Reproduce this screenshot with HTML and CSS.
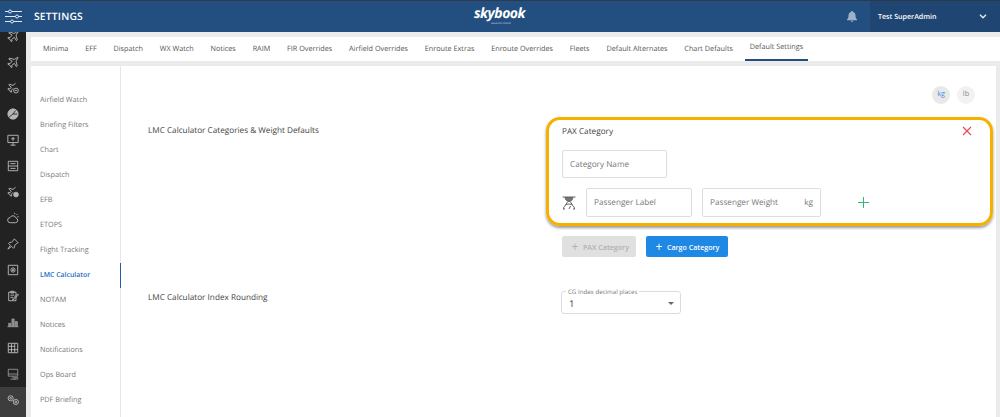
FILE: index.html
```html
<!DOCTYPE html>
<html lang="en">
<head>
    <meta charset="UTF-8">
    <title>Settings</title>
    <link rel="stylesheet" href="styles.css">
</head>
<body>
    <header class="topbar">
        <div class="topbar-menu">
            <svg width="17" height="15" viewBox="0 0 17 15" fill="none" stroke="#dfe8f2" stroke-width="1">
                <path d="M0 2.500h17M0 7.500h17M0 12.500h17"/>
                <circle cx="5" cy="2.500" r="1.500" fill="#234f80"/>
                <circle cx="12" cy="7.500" r="1.500" fill="#234f80"/>
                <circle cx="7" cy="12.500" r="1.500" fill="#234f80"/>
            </svg>
        </div>
        <div class="topbar-title">SETTINGS</div>
        <div class="logo">
            <span class="logo-name">skybook</span>
            <span class="logo-sub">aviation cloud</span>
        </div>
        <div class="topbar-bell">
            <svg width="10" height="11" viewBox="0 0 10 11" fill="#9db2c9">
                <path d="M5 0c.6 0 1 .4 1 1 1.700.5 2.500 1.800 2.500 3.500 0 2 .5 3 1.500 4v.7H0v-.7c1-1 1.500-2 1.500-4C1.500 2.800 2.300 1.500 4 1c0-.6.4-1 1-1zM3.700 9.800h2.600C6.200 10.500 5.700 11 5 11s-1.200-.5-1.300-1.200z"/>
            </svg>
        </div>
        <div class="topbar-user">
            <span>Test SuperAdmin</span>
            <svg width="8" height="5" viewBox="0 0 8 5" fill="none" stroke="#e6edf5" stroke-width="1.300">
                <path d="M1 .8l3 3 3-3"/>
            </svg>
        </div>
    </header>

    <div class="main">
        <nav class="rail">
            <div class="rail-list">
                <div class="rail-item"><svg viewBox="0 0 14 14"><path d="M12.500 1.500L8.500 4 3 2.500 2 3.500 6 6 3.500 9 1.500 8.500 1 9.500l2.500 1.500L5 13.500l1-.5-.5-2L8.500 8.500 11 12.500l1-1L10.500 6 13 2z"/></svg></div>
                <div class="rail-item"><svg viewBox="0 0 14 14"><path d="M12.500 1.500L8.500 4 3 2.500 2 3.500 6 6 3.500 9 1.500 8.500 1 9.500l2.500 1.500L5 13.500l1-.5-.5-2L8.500 8.500 11 12.500l1-1L10.500 6 13 2z"/></svg></div>
                <div class="rail-item"><svg viewBox="0 0 14 14"><path d="M10 1.500L7 4 3 2.500 2 3.500 5 6 3.500 8 1.500 7.500 1 8.500l2 1.200L4.500 12l1-.5-.5-1.800L7 7.500"/><circle cx="10.500" cy="10" r="2.800"/><path d="M9 10h3"/></svg></div>
                <div class="rail-item"><svg viewBox="0 0 14 14"><circle cx="7" cy="7" r="6" class="solid"/><path d="M2.500 10.500L7 7l3-4M7 7h5" class="cut"/></svg></div>
                <div class="rail-item"><svg viewBox="0 0 14 14"><path d="M1 1.500h12v8.500H1zM7 10v3M4 13h6M7 3.500v4.500M5 5.500h4"/></svg></div>
                <div class="rail-item"><svg viewBox="0 0 14 14"><path d="M1.500 1.500h11v11h-11zM1.500 7h11M4 4.200h6M4 9.800h6"/></svg></div>
                <div class="rail-item"><svg viewBox="0 0 14 14"><path d="M10 1.500L7 4 3 2.500 2 3.500 5 6 3.500 8 1.500 7.500 1 8.500l2 1.200L4.500 12l1-.5-.5-1.800L7 7.500"/><circle cx="10.500" cy="10" r="2.800" class="solid"/></svg></div>
                <div class="rail-item"><svg viewBox="0 0 14 14"><path d="M4 12.500a3 3 0 0 1-.5-6A3.800 3.800 0 0 1 10.500 7a2.800 2.800 0 0 1-.5 5.500zM9 1v1.500M12 2.500l-1 1M13.500 5.500H12"/></svg></div>
                <div class="rail-item"><svg viewBox="0 0 14 14"><path d="M8.500 1L13 5.500l-1.200.6-2.800 2.400-.3 2.500-1 1-2.200-2.200L1 13l3-4.500L1.800 6.300l1-1 2.500-.3 2.500-2.800z"/></svg></div>
                <div class="rail-item"><svg viewBox="0 0 14 14"><path d="M1.500 1.500h11v11h-11z"/><circle cx="7" cy="7" r="2.500"/><circle cx="7" cy="7" r=".8" class="solid"/></svg></div>
                <div class="rail-item"><svg viewBox="0 0 14 14"><path d="M2 2.500h8.500v10H2zM4.500 1.500h3.500v2H4.500zM4 6h4.500M4 8.500h3M7 10l5.500-5.500 1 1L8 11l-1.500.3z"/></svg></div>
                <div class="rail-item rail-dim"><svg viewBox="0 0 14 14"><path d="M.5 12.500h13M2 12.500v-4h2.500v4M5.800 12.500v-9h2.500v9M9.500 12.500v-6H12v6" class="filled"/></svg></div>
                <div class="rail-item"><svg viewBox="0 0 14 14"><path d="M1.500 1.500h11v11h-11zM5.200 1.500v11M9 1.500v11M1.500 5h7.500M1.500 9h11"/></svg></div>
                <div class="rail-item rail-dim"><svg viewBox="0 0 14 14"><path d="M1.500 1.500h11v8h-11z"/><path d="M1.500 7h11M7 9.500v3M4 13h6M9 11h3.500v2H9z"/></svg></div>
                <div class="rail-item rail-active"><svg viewBox="0 0 14 14"><circle cx="4.300" cy="5" r="3"/><circle cx="4.300" cy="5" r="1"/><circle cx="10.300" cy="9.300" r="3"/><circle cx="10.300" cy="9.300" r="1"/></svg></div>
            </div>
        </nav>

        <div class="page">
            <div class="tabs">
                <a class="tab">Minima</a>
                <a class="tab">EFF</a>
                <a class="tab">Dispatch</a>
                <a class="tab">WX Watch</a>
                <a class="tab">Notices</a>
                <a class="tab">RAIM</a>
                <a class="tab">FIR Overrides</a>
                <a class="tab">Airfield Overrides</a>
                <a class="tab">Enroute Extras</a>
                <a class="tab">Enroute Overrides</a>
                <a class="tab">Fleets</a>
                <a class="tab">Default Alternates</a>
                <a class="tab">Chart Defaults</a>
                <a class="tab tab-active">Default Settings</a>
            </div>

            <div class="panel">
                <aside class="subnav">
                    <a class="subnav-item">Airfield Watch</a>
                    <a class="subnav-item">Briefing Filters</a>
                    <a class="subnav-item">Chart</a>
                    <a class="subnav-item">Dispatch</a>
                    <a class="subnav-item">EFB</a>
                    <a class="subnav-item">ETOPS</a>
                    <a class="subnav-item">Flight Tracking</a>
                    <a class="subnav-item subnav-active">LMC Calculator</a>
                    <a class="subnav-item">NOTAM</a>
                    <a class="subnav-item">Notices</a>
                    <a class="subnav-item">Notifications</a>
                    <a class="subnav-item">Ops Board</a>
                    <a class="subnav-item">PDF Briefing</a>
                </aside>

                <section class="content">
                    <div class="units">
                        <span class="unit unit-on">kg</span>
                        <span class="unit">lb</span>
                    </div>

                    <div class="setting setting-categories">
                        <div class="setting-name">LMC Calculator Categories &amp; Weight Defaults</div>
                        <div class="setting-body">
                            <div class="card">
                                <div class="card-head">
                                    <span>PAX Category</span>
                                    <svg width="10" height="10" viewBox="0 0 10 10" fill="none" stroke="#e5484d" stroke-width="1.100">
                                        <path d="M1 1l8 8M9 1l-8 8"/>
                                    </svg>
                                </div>
                                <div class="field field-name">Category Name</div>
                                <div class="card-row">
                                    <svg class="scale" width="14" height="14" viewBox="0 0 14 14" fill="none" stroke="#666" stroke-width="1">
                                        <path d="M.5 1h13"/>
                                        <path d="M3 1.500h8C10.500 4 9 5.500 7 5.500S3.500 4 3 1.500z" fill="#777"/>
                                        <path d="M5.500 6L3.500 9M8.500 6l2 3"/>
                                        <path d="M1.500 13a5.500 5 0 0 1 11 0M7 13l1.500-3M1 13h2M11 13h2"/>
                                    </svg>
                                    <div class="field field-label">Passenger Label</div>
                                    <div class="field field-weight"><span>Passenger Weight</span><span>kg</span></div>
                                    <svg class="add" width="11" height="11" viewBox="0 0 11 11">
                                        <path d="M5.500 0v11M0 5.500h11"/>
                                    </svg>
                                </div>
                            </div>
                            <div class="actions">
                                <button class="btn btn-off"><span class="btn-plus">+</span>PAX Category</button>
                                <button class="btn btn-blue"><span class="btn-plus">+</span>Cargo Category</button>
                            </div>
                        </div>
                    </div>

                    <div class="setting setting-rounding">
                        <div class="setting-name">LMC Calculator Index Rounding</div>
                        <div class="setting-body">
                            <div class="select">
                                <span class="select-label">CG Index decimal places</span>
                                <span>1</span>
                                <span class="select-arrow"></span>
                            </div>
                        </div>
                    </div>
                </section>
            </div>
        </div>
    </div>
</body>
</html>
```

FILE: styles.css
```css
* {
    box-sizing: border-box;
}
html, body {
    height: 417px;
    overflow: hidden;
}
body {
    margin: 0;
    font-family: "Open Sans", Arial, sans-serif;
    font-size: 7.250px;
    color: #555;
    background: #ebebeb;
    text-rendering: geometricPrecision;
}

/* top bar */
.topbar {
    display: flex;
    align-items: center;
    height: 32px;
    background: #234f80;
    border-top: 1px solid #2c3a4a;
    color: white;
}
.topbar-menu {
    width: 34px;
    padding-left: 5px;
    display: flex;
}
.topbar-title {
    width: 440px;
    font-size: 10.300px;
    font-weight: 600;
    letter-spacing: 0.2px;
}
.logo {
    width: 373px;
    display: flex;
    flex-direction: column;
    line-height: 1;
}
.logo-name {
    font-size: 14px;
    font-weight: 700;
    font-style: italic;
    letter-spacing: -0.5px;
    margin-top: -1px;
}
.logo-sub {
    font-size: 3px;
    margin: 1px 0 0 17px;
    color: #c9d6e4;
}
.topbar-bell {
    width: 23px;
    display: flex;
}
.topbar-user {
    flex: 1;
    align-self: stretch;
    display: flex;
    align-items: center;
    justify-content: space-between;
    padding: 0 13px 0 8px;
    background: #1f4672;
    font-size: 7.100px;
    font-weight: 600;
}

/* layout */
.main {
    display: flex;
    height: 385px;
}
.rail {
    width: 26px;
    flex-shrink: 0;
    background: #222;
    overflow: hidden;
}
.rail-list {
    margin-top: -9px;
}
.rail-item {
    height: 26px;
    display: flex;
    align-items: center;
    justify-content: center;
}
.rail-item svg {
    width: 12px;
    height: 12px;
    fill: none;
    stroke: #c4c4c4;
    stroke-width: 1;
}
.rail-item .solid {
    fill: #b5b5b5;
    stroke: #b5b5b5;
}
.rail-item .cut {
    stroke: #222;
}
.rail-item .filled {
    fill: #888;
}
.rail-dim svg {
    stroke: #9a9a9a;
}
.rail-active {
    height: 30px;
    padding-bottom: 4px;
    background: #3d3d3d;
}
.page {
    flex: 1;
    padding: 5px 0 0 5px;
    display: flex;
    flex-direction: column;
    min-width: 0;
}

/* tabs */
.tabs {
    height: 24px;
    flex-shrink: 0;
    display: flex;
    gap: 16.800px;
    padding-left: 12px;
    background: white;
}
.tab {
    line-height: 24px;
    white-space: nowrap;
    color: #555;
}
.tab-active {
    line-height: 21px;
    padding: 0 5px;
    margin-left: -5px;
    margin-right: -5px;
    border-bottom: 2px solid #234f80;
}

/* panel */
.panel {
    flex: 1;
    display: flex;
    margin: 5px 4px 0 0;
    background: white;
    min-height: 0;
}
.subnav {
    width: 90px;
    flex-shrink: 0;
    padding-top: 22px;
    border-right: 1px solid #e6e6e6;
    display: flex;
    flex-direction: column;
}
.subnav-item {
    height: 25px;
    line-height: 25px;
    padding-left: 9px;
    color: #777;
    white-space: nowrap;
}
.subnav-active {
    color: #1e6fc4;
    font-size: 6.900px;
    font-weight: 600;
    margin-right: -1px;
    border-right: 1px solid #1e5fa8;
}

/* settings */
.content {
    flex: 1;
    padding: 20px 0 0 27px;
    min-width: 0;
}
.units {
    display: flex;
    justify-content: flex-end;
    gap: 7px;
    padding-right: 21px;
}
.unit {
    width: 18px;
    height: 18px;
    line-height: 17px;
    border-radius: 50%;
    background: #f2f2f2;
    text-align: center;
    color: #888;
}
.unit-on {
    background: #e9e9e9;
    color: #3d8fe0;
}
.setting {
    display: flex;
}
.setting-categories {
    margin-top: 13px;
}
.setting-rounding {
    margin-top: 34px;
}
.setting-name {
    width: 398px;
    flex-shrink: 0;
    font-size: 8.200px;
    color: #444;
    padding-top: 8px;
}
.setting-rounding .setting-name {
    padding-top: 1px;
}
.setting-body {
    flex: 1;
    min-width: 0;
}

/* highlighted card */
.card {
    width: 447px;
    height: 109px;
    padding: 5px 18px 0 13px;
    border: 3px solid #f5b000;
    border-radius: 14px;
    box-shadow: 0 2px 3px rgba(0, 0, 0, 0.4);
}
.card-head {
    display: flex;
    align-items: center;
    justify-content: space-between;
    height: 12px;
    font-size: 8.200px;
    color: #444;
}
.field {
    height: 29px;
    line-height: 27px;
    padding: 0 7px;
    border: 1px solid #dedede;
    border-radius: 2px;
    font-size: 8.200px;
    color: #777;
    background: white;
}
.field-name {
    width: 105px;
    height: 28px;
    margin-top: 13px;
}
.card-row {
    display: flex;
    align-items: center;
    margin-top: 10px;
}
.scale {
    margin-right: 10px;
}
.field-label {
    width: 106px;
    margin-right: 10px;
}
.field-weight {
    width: 119px;
    display: flex;
    justify-content: space-between;
}
.add {
    margin-left: 37px;
    stroke: #35b57a;
    stroke-width: 1;
}
.actions {
    display: flex;
    gap: 10px;
    margin: 10px 0 0 16px;
}
.btn {
    height: 21px;
    padding: 0 7px 0 5px;
    border: none;
    border-radius: 2px;
    font-family: inherit;
    font-size: 7.100px;
    font-weight: 600;
    display: flex;
    align-items: center;
}
.btn-plus {
    width: 16px;
    font-size: 12px;
    font-weight: 400;
}
.btn-off {
    background: #e0e0e0;
    color: #b0b0b0;
}
.btn-blue {
    padding-right: 9px;
    background: #1e88e5;
    color: white;
}

/* select */
.select {
    position: relative;
    width: 120px;
    height: 23px;
    margin: 0 0 0 15px;
    padding: 5px 7px 0;
    border: 1px solid #dcdcdc;
    border-radius: 3px;
    font-size: 9.500px;
    color: #333;
}
.select-label {
    position: absolute;
    top: -5px;
    left: 4px;
    padding: 0 2px;
    background: white;
    font-size: 6.150px;
    line-height: 9px;
    color: #777;
}
.select-arrow {
    position: absolute;
    top: 10px;
    right: 6px;
    border-left: 3px solid transparent;
    border-right: 3px solid transparent;
    border-top: 3px solid #666;
}
```
